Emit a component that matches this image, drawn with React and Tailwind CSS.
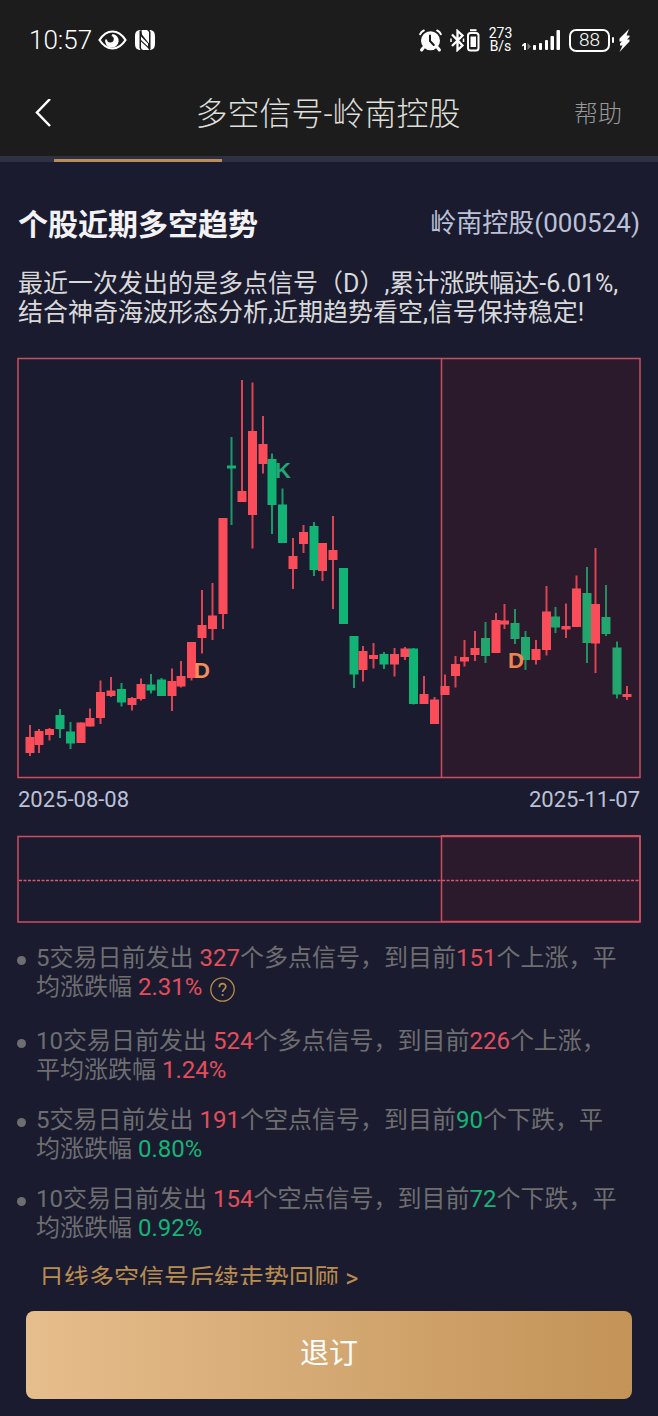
import React from "react";

// [center x, high, body top, body bottom, low, rising]
const CANDLES = [
  [30, 725, 737, 753, 756, 1], [39, 729, 731, 745, 753, 1], [49.5, 728, 729, 735, 740.5, 1],
  [60, 709, 715, 729, 738, 0], [70.5, 722, 731.5, 743.5, 749, 0], [81, 722.5, 722.5, 743, 743, 1],
  [90, 708.5, 718, 726.5, 726.5, 1], [100.5, 680.5, 692, 718, 724, 1], [111, 677, 690.5, 696, 697, 1],
  [121.5, 683, 689, 702.5, 706.5, 0], [132, 697, 698, 705, 710.5, 1], [141, 678.5, 684, 699, 700.5, 1],
  [151, 674, 684.5, 690.5, 693.5, 0], [161.5, 678, 679.5, 696, 696, 0], [172, 668.5, 681, 696, 711, 1],
  [181, 661, 676, 686.5, 687.5, 1], [191.5, 642, 642, 678, 680.5, 1], [202, 590, 625, 638, 653.5, 1],
  [212.5, 583, 615.5, 629, 640, 1], [223, 518, 518, 614, 629, 1], [231.5, 437, 465.5, 468.5, 525, 0],
  [242, 380, 491, 502, 502, 1], [252.5, 382.5, 431, 515, 548.5, 1], [263, 416, 444, 464, 473.5, 1],
  [272, 453.5, 459, 505, 534, 0], [282.5, 488.5, 504.5, 543, 543, 0], [293, 538, 556, 569, 589, 1],
  [303.5, 525, 532, 544, 553, 1], [314, 522, 526, 570, 576, 0], [322.5, 543, 543, 571, 581, 1],
  [333, 516, 550, 560, 609, 1], [343.5, 568, 568, 624, 624, 0], [354, 636, 636, 674.5, 688, 0],
  [363, 646, 651, 670, 681.5, 1], [373.5, 643, 655, 659, 668.5, 1], [384, 652, 654, 664.5, 669, 0],
  [394.5, 648, 654, 664.5, 676.5, 1], [405, 647, 648.5, 657, 660, 1], [413.5, 648, 648.5, 704, 704.5, 0],
  [424, 676, 694, 704, 704, 1], [434.5, 697, 699.5, 724, 724, 1], [445, 674.5, 686, 695, 695, 1],
  [455.5, 656, 664, 676, 687.5, 1], [464.5, 640, 657, 661.5, 666.5, 1], [475, 631, 648, 655, 661, 1],
  [485.5, 622, 638, 656, 663, 0], [496, 613, 620, 653, 653, 1], [504.5, 604, 620.5, 624.5, 629, 1],
  [515, 609, 623, 639, 644, 0], [525.5, 631, 637, 660, 670, 0], [536, 640, 649, 660, 664.5, 1],
  [546.5, 586, 611.5, 650, 655.5, 1], [555.5, 607, 616.5, 627.5, 633, 0], [566, 603.5, 626, 629.5, 638, 1],
  [576.5, 575.5, 588.5, 627, 627, 1], [587, 567, 593, 643, 663, 0], [595.5, 548, 604, 643.5, 673, 1],
  [606, 585, 617, 634, 636, 0], [617, 641.5, 647.5, 694.5, 698.5, 0], [627, 686, 694, 697, 700, 1],
];

const MARKS = [
  { label: "D", x: 194, y: 678, color: "#f0905c" },
  { label: "K", x: 275, y: 478, color: "#22a877" },
  { label: "D", x: 508, y: 668, color: "#f0844f" },
];

const SIGNALS = [
  { days: 5, sent: 327, kind: "多", hit: 151, move: "上涨", avg: "2.31%", up: true, help: true },
  { days: 10, sent: 524, kind: "多", hit: 226, move: "上涨", avg: "1.24%", up: true },
  { days: 5, sent: 191, kind: "空", hit: 90, move: "下跌", avg: "0.80%", up: false },
  { days: 10, sent: 154, kind: "空", hit: 72, move: "下跌", avg: "0.92%", up: false },
];

function StatusBar() {
  return (
    <div className="flex h-20 items-center justify-between pl-[29px] pr-[28px] text-white">
      <div className="flex items-center">
        <span className="w-[69px] text-[26px] font-light leading-8">10:57</span>
        <svg className="h-5 w-[29px]" viewBox="0 0 29 20" fill="none">
          <path d="M1.500 10C5 4.500 9.500 1.500 14.500 1.500S24 4.500 27.500 10C24 15.500 19.500 18.500 14.500 18.500S5 15.500 1.500 10Z" stroke="#fff" strokeWidth="2.200" />
          <path d="M14.500 4a6.800 6.800 0 1 1-7.300 5.500L9 9.500a3.400 3.400 0 1 0 4.500-3.500Z" fill="#fff" />
        </svg>
        <svg className="ml-2 h-5 w-5" viewBox="0 0 20 20">
          <path d="M5 0C1 .500 0 2.500 0 7v6c0 4.500 1 6.500 5 7h.500L4.500 18V1L6 0ZM6 6.500 13 13.500V16.500L6 10ZM6 11.500 13 18l1 2H8.500Q6.500 20 6 18ZM15 20c4-.500 5-2.500 5-7V7c0-4.500-1-6.500-5-7h-.500l1 2v17l-1 1ZM14 13.500V2L12 0H6.500L7 4.500Z" fill="#fff" />
        </svg>
      </div>
      <div className="flex items-center">
        <svg className="h-[23px] w-[23px]" viewBox="0 0 23 23" fill="none" stroke="#fff" strokeLinecap="round">
          <circle cx="11.500" cy="11.800" r="9.500" fill="#fff" stroke="none" />
          <path d="M1.200 5.200Q2.200 2.600 4.800 1.500M21.800 5.200Q20.800 2.600 18.200 1.500" strokeWidth="2" />
          <path d="M4.500 18.500 2.600 21M18.500 18.500l1.900 2.500" strokeWidth="3" />
          <path d="M11 6.500V12l3.800 4" stroke="#1c1c1c" strokeWidth="2" />
        </svg>
        <svg className="ml-2 h-[23px] w-[30px]" viewBox="0 0 30 23" fill="none" stroke="#fff" strokeWidth="2.300">
          <path d="m2 5.500 10.500 11-5 4.500V2l5 4.500L2 17" />
          <path d="M1 9.500v3.500M13.500 9.500v3.500" strokeWidth="1.500" />
          <rect x="18" y="4" width="10.500" height="17.500" rx="2.500" strokeWidth="2" />
          <path d="M20 1.200h6.500" strokeWidth="2" />
          <path d="M20.500 7.500h5.500v10.500h-5.500z" fill="#fff" stroke="none" />
        </svg>
        <div className="ml-2 w-[25px] text-center text-sm leading-[13px]">
          <div>273</div>
          <div>B/s</div>
        </div>
        <svg className="ml-[9px] h-[23px] w-[38px]" viewBox="0 0 38 23" fill="#fff">
          <path d="M4 14v7H2v-4.500L0 17.500V16l2.300-2Z" />
          <path d="M5.500 14v7l3.500-3.500Z" fill="#777" />
          <rect x="11" y="16" width="3" height="5" rx="1" />
          <rect x="17" y="14" width="3" height="7" rx="1" />
          <rect x="23" y="11" width="3" height="10" rx="1" />
          <rect x="28.500" y="7" width="3.500" height="14" rx="1" />
          <rect x="34.500" y="1" width="3.500" height="20" rx="1" />
        </svg>
        <div className="ml-[9px] flex h-[23px] w-[41px] items-center justify-center rounded-[7px] border-2 border-white text-[19px] font-light leading-5">
          88
        </div>
        <div className="ml-0.5 h-1.5 w-0.5 rounded bg-white" />
        <svg className="ml-[5px] h-[23px] w-[11px]" viewBox="0 0 11 23" fill="#fff">
          <path d="M10 0 .500 9.500v3H3L1 14.500V16.500H3.500L.500 23 10.500 12.500V10.500H8L10.500 8V6.500H7.500Z" />
        </svg>
      </div>
    </div>
  );
}

function CandleChart() {
  return (
    <svg className="mt-[30px] block w-full" viewBox="17 357 624 422" role="img" aria-label="K线图">
      <rect x="442" y="358" width="198" height="420" fill="#2a1a2c" />
      <path d="M18 358.500H640V777.500H18ZM441.500 358V778" fill="none" stroke="#c94f60" strokeWidth="1.500" />
      {CANDLES.map(([x, high, top, bottom, low, up]) => (
        <g key={x} fill={up ? "#fb4c5a" : x > 442 ? "#22a66d" : "#12b475"}>
          <rect x={x - 1} y={high} width="2" height={low - high} opacity="0.85" />
          <rect x={x - 4.5} y={top} width="9" height={bottom - top} />
        </g>
      ))}
      {MARKS.map((m) => (
        <text key={m.x} x={m.x} y={m.y} fill={m.color} fontSize="22" fontWeight="700" fontFamily="Liberation Sans, Arial, sans-serif">
          {m.label}
        </text>
      ))}
    </svg>
  );
}

function TrendBand() {
  return (
    <svg className="mt-[23px] block w-full" viewBox="17 835 624 88" aria-hidden="true">
      <rect x="442" y="836" width="198" height="86" fill="#2a1a2c" />
      <path d="M18 836.500H640V922H18Z" fill="none" stroke="#c94f60" strokeWidth="1.500" />
      <path d="M441.500 835.500H640V921.500H441.500Z" fill="none" stroke="#c94f60" strokeWidth="1.500" />
      <path d="M19 880.500H640" stroke="#d05b6b" strokeWidth="1.500" strokeDasharray="3 1.500" />
    </svg>
  );
}

function SignalItem({ days, sent, kind, hit, move, avg, up, help }) {
  const tone = up ? "text-[#e34e5d]" : "text-[#14b576]";
  return (
    <li className="flex gap-[10px]">
      <span className="mt-3 size-[9px] shrink-0 rounded-full bg-[#6e6e70]" />
      <div className="max-w-[588px]">
        {`${days}交易日前发出 `}
        <span className="text-[#e34e5d]">{sent}</span>
        {`个${kind}点信号，到目前`}
        <span className={tone}>{hit}</span>
        {`个${move}，平均涨跌幅 `}
        <span className={tone}>{avg}</span>
        {help && (
          <button type="button" aria-label="说明" className="ml-2 inline-flex h-8 w-[25px] items-center align-[-7px]">
            <svg className="size-[25px]" viewBox="0 0 25 25" fill="none" stroke="#b98c50" strokeWidth="1.300">
              <circle cx="12.500" cy="12.500" r="11.700" />
              <path d="M9.300 10.200C9.300 5.500 15.800 5.800 15.800 9.600c0 2.600-3.200 2.800-3.200 5.400" strokeWidth="1.700" />
              <circle cx="12.600" cy="18" r="1.100" fill="#b98c50" stroke="none" />
            </svg>
          </button>
        )}
      </div>
    </li>
  );
}

export default function App() {
  return (
    <div className="flex h-screen flex-col bg-[#1a1b2f] font-['Roboto','Noto_Sans_CJK_SC',sans-serif]">
      <header className="shrink-0 bg-[#1c1c1c]">
        <StatusBar />
        <div className="flex h-[76px] items-center justify-between pb-2 pl-[34px] pr-9">
          <button type="button" aria-label="返回" className="flex h-10 w-12 items-center">
            <svg className="h-[30px] w-[18px]" viewBox="0 0 18 30" fill="none" stroke="#fff" strokeWidth="2.500">
              <path d="M16 0 3 13.500 16 27" />
            </svg>
          </button>
          <h1 className="text-[32px] font-light leading-10 text-[#dededa]">多空信号-岭南控股</h1>
          <button type="button" className="text-2xl font-light leading-10 text-[#999]">帮助</button>
        </div>
        <div className="h-1.5 bg-[#2e3142] pl-[54px] pt-[3px]">
          <div className="h-[3px] w-[168px] bg-[#b88d5b]" />
        </div>
      </header>

      <main className="min-h-0 flex-1 overflow-y-auto px-[17px] pt-[42px] [scrollbar-width:none]">
        <div className="flex h-10 justify-between px-px">
          <h2 className="text-[30px] font-bold leading-[42px] text-[#f2f2f4]">个股近期多空趋势</h2>
          <span className="text-[26px] leading-[38px] text-[#bcc1d8]">岭南控股(000524)</span>
        </div>
        <p className="mt-[25px] px-px text-[25px] leading-[29px] text-[#d9d9da]">
          最近一次发出的是多点信号（D）,累计涨跌幅达-6.01%,
          <br />
          结合神奇海波形态分析,近期趋势看空,信号保持稳定!
        </p>
        <CandleChart />
        <div className="mt-[9px] flex justify-between px-px text-[22px] leading-6 text-[#bcc1d8]">
          <time>2025-08-08</time>
          <time>2025-11-07</time>
        </div>
        <TrendBand />
        <ul className="mt-[21px] flex flex-col gap-[21px] text-2xl leading-[29px] text-[#6e6e70]">
          {SIGNALS.map((s) => (
            <SignalItem key={s.sent} {...s} />
          ))}
        </ul>
        <a href="#review" className="ml-[22px] mt-[21px] block text-[25px] leading-[29px] text-[#b98c50]">
          日线多空信号后续走势回顾 &gt;
        </a>
      </main>

      <footer className="shrink-0 px-[26px] pb-[17px] pt-[26px]">
        <button type="button" className="h-[88px] w-full rounded-lg bg-linear-to-r from-[#e6bd8c] via-[#d4a872] to-[#c39357] text-[29px] text-white">
          退订
        </button>
      </footer>
    </div>
  );
}
